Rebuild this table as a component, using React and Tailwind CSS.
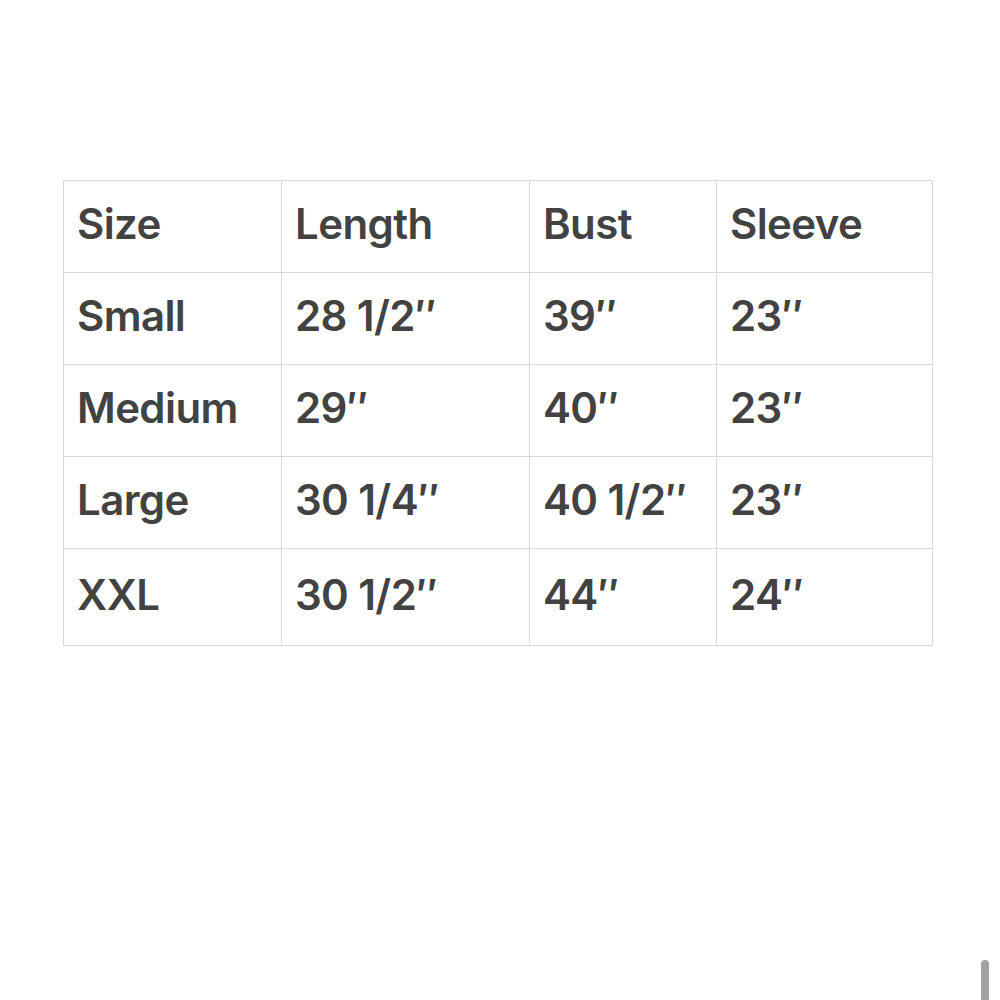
const rows = [
  ["Size", "Length", "Bust", "Sleeve"],
  ["Small", "28 1/2″", "39″", "23″"],
  ["Medium", "29″", "40″", "23″"],
  ["Large", "30 1/4″", "40 1/2″", "23″"],
  ["XXL", "30 1/2″", "44″", "24″"],
];

export default function App() {
  return (
    <div className="relative w-[1000px] h-[1000px] bg-white overflow-hidden" style={{ fontFamily: "Inter, 'Noto Sans', sans-serif" }}>
      <div className="pt-[180px] pl-[63px]">
        <div className="grid grid-cols-[218px_248px_187px_216px] border-t-[1.5px] border-l-[1.5px] border-[#d9d9d9] w-[869px]">
          {rows.map((row, i) =>
            row.map((cell, j) => (
              <div
                key={`${i}-${j}`}
                className={`border-r-[1.5px] border-b-[1.5px] border-[#d9d9d9] pl-[13px] flex items-center pb-[6px] text-[42px] font-semibold text-[#424242] tracking-[-0.6px] ${i === 4 ? "h-[97px]" : "h-[92px]"}`}
              >
                {cell}
              </div>
            ))
          )}
        </div>
      </div>
      <div className="absolute left-[981px] top-[960px] w-[8px] h-[40px] rounded-t-full bg-[#a2a2a2]" />
    </div>
  );
}
